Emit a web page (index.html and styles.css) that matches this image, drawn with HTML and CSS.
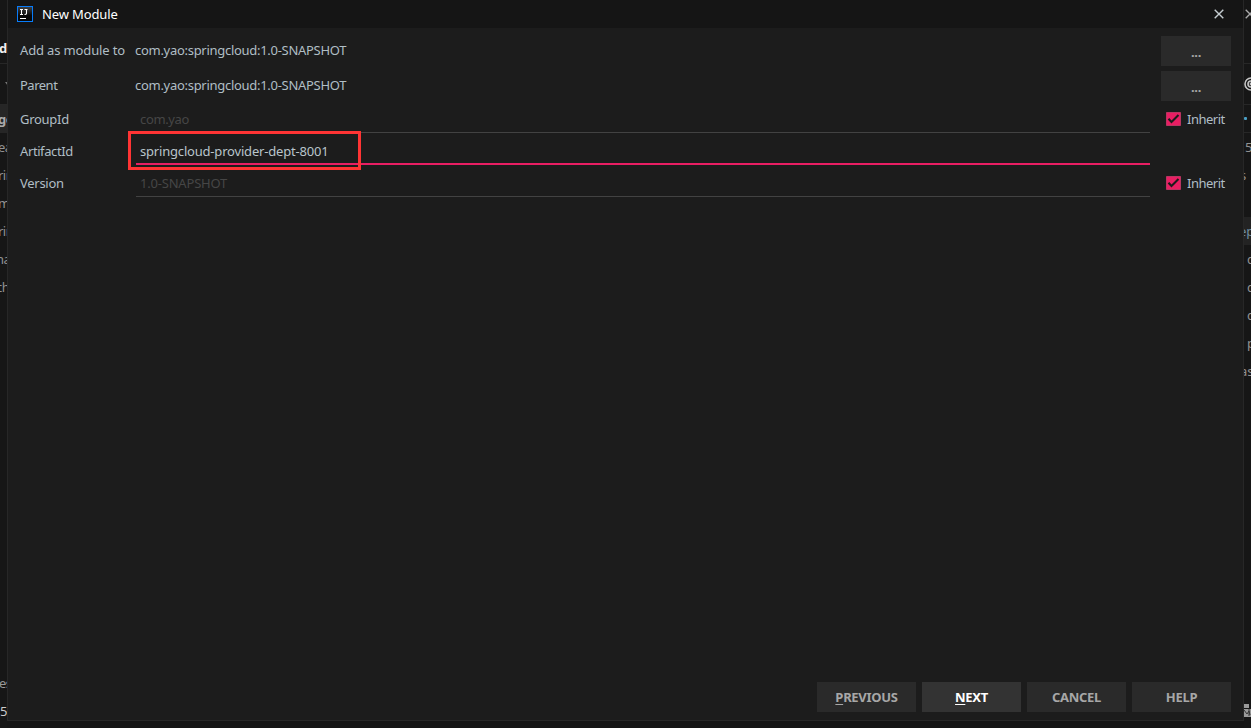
FILE: index.html
```html
<!DOCTYPE html>
<html lang="en">
<head>
<meta charset="utf-8">
<title>New Module</title>
<link rel="stylesheet" href="styles.css">
</head>
<body>
<div class="screen">
  <aside class="strip left">
    <div class="line tabs"><b>d</b></div>
    <div class="line tool"><svg width="3" height="4" viewBox="0 0 3 4"><path d="M0 0H3V4Z" fill="#777"/></svg></div>
    <div class="line selected"><b>ge</b></div>
    <div class="line">ea</div>
    <div class="line">rin</div>
    <div class="line">m</div>
    <div class="line">rin</div>
    <div class="line shifted">na</div>
    <div class="line shifted">ch</div>
    <div class="line low">es</div>
    <div class="line bright">5</div>
  </aside>
  <main class="dialog">
    <header class="titlebar">
      <svg class="logo" width="16" height="16" viewBox="0 0 16 16">
        <defs><linearGradient id="g" x2="0" y2="1"><stop stop-color="#444"/><stop offset=".6" stop-color="#080808"/></linearGradient></defs>
        <rect x=".5" y=".5" width="15" height="15" fill="url(#g)" stroke="#087cfa"/>
        <path d="M3 3.5H6M4.5 3.5V8.5M3 8.5H6M7.5 3.5H10.5M9.5 3.5V7.5Q9.5 8.5 7.5 8.5M3 12.5H9" fill="none" stroke="#fff" stroke-width="1.1"/>
      </svg>
      <span class="title">New Module</span>
      <svg class="close" width="10" height="10" viewBox="0 0 10 10"><path d="M.7.7 9.3 9.3M9.3.7.7 9.3" stroke="#c5cdd1" stroke-width="1.4"/></svg>
    </header>
    <section class="form">
      <div class="row tall"><label class="l1">Add as module to</label><span class="value">com.yao:springcloud:1.0-SNAPSHOT</span><button class="more">...</button></div>
      <div class="row tall"><label class="l2">Parent</label><span class="value">com.yao:springcloud:1.0-SNAPSHOT</span><button class="more">...</button></div>
      <div class="row"><label class="l3">GroupId</label><div class="field disabled"><span class="f1">com.yao</span></div>
        <div class="check"><svg width="15" height="14" viewBox="0 0 15 14"><path d="M.5.5H14.5V13.5H.5Z" fill="#e91e63" stroke="#b93461"/><path d="M2.5 6.8 5.5 10 12.5 3" fill="none" stroke="#1b1b1b" stroke-width="2.1"/></svg><span>Inherit</span></div></div>
      <div class="row"><label class="l4">ArtifactId</label><div class="field active"><span class="f2">springcloud-provider-dept-8001</span><i class="highlight"></i></div></div>
      <div class="row"><label class="l5">Version</label><div class="field disabled"><span class="f3">1.0-SNAPSHOT</span></div>
        <div class="check"><svg width="15" height="14" viewBox="0 0 15 14"><path d="M.5.5H14.5V13.5H.5Z" fill="#e91e63" stroke="#b93461"/><path d="M2.5 6.8 5.5 10 12.5 3" fill="none" stroke="#1b1b1b" stroke-width="2.1"/></svg><span>Inherit</span></div></div>
    </section>
    <footer class="actions">
      <button><span class="b1"><u>P</u>REVIOUS</span></button>
      <button class="primary"><span class="b2"><u>N</u>EXT</span></button>
      <button><span class="b3">CANCEL</span></button>
      <button><span class="b4">HELP</span></button>
    </footer>
  </main>
  <aside class="strip right">
    <div class="line top"><svg width="10" height="10" viewBox="0 0 10 10"><path d="M.7.7 9.3 9.3M9.3.7.7 9.3" stroke="#aaa" stroke-width="1.3"/></svg></div>
    <div class="line rule"></div>
    <div class="line target"><svg width="14" height="14" viewBox="0 0 14 14" fill="none" stroke="#c4c4c4" stroke-width="1.6"><circle cx="7" cy="7" r="6"/><circle cx="7" cy="7" r="3"/><circle cx="7" cy="7" r=".6"/></svg></div>
    <div class="line dot"><i></i></div>
    <div class="line five">5</div>
    <div class="line back">s</div>
    <div class="line picked">ep</div>
    <div class="line in">c</div>
    <div class="line in">c</div>
    <div class="line in">c</div>
    <div class="line in">p</div>
    <div class="line back2">as</div>
    <div class="line corner"><svg width="10" height="13" viewBox="0 0 10 13"><path d="M0 0H5V4H0ZM0 5H10V13H0Z" fill="#999"/><path d="M0 6 3 10 5 7 6 11M5 5V12" fill="none" stroke="#333"/></svg></div>
  </aside>
</div>
</body>
</html>
```
FILE: styles.css
```css
* { box-sizing: border-box; }
body {
  margin: 0;
  background: #151515;
  color: #b0bec5;
  font: 13px/20px "Noto Sans", sans-serif;
}
.screen { width: 1251px; height: 728px; display: flex; align-items: flex-start; overflow: hidden; }
svg { display: block; flex: none; }

.strip { height: 728px; overflow: hidden; background: #161616; color: #929292; }
.line { display: flex; align-items: center; height: 28px; white-space: nowrap; }
.left { width: 7px; }
.left .line { padding-bottom: 1px; text-indent: -2px; letter-spacing: -.5px; }
.left .tabs { height: 64px; padding-top: 33px; border-bottom: 1px solid #272727; color: #eee; text-indent: -1px; }
.left .tool { height: 41px; border-bottom: 1px solid #272727; padding-left: 5px; }
.left .selected { background: #262626; color: #aaa; }
.left .shifted { text-indent: -4px; }
.left .low { margin-top: 368px; color: #999; text-indent: -1px; }
.left .bright { color: #ccc; text-indent: 0; }

.right { width: 7px; }
.right .line { padding-left: 1px; }
.right .rule { height: 36px; border-bottom: 1px solid #272727; }
.right .target { height: 41px; padding-left: 0; border-bottom: 1px solid #272727; }
.right .dot { padding-left: 0; border-bottom: 1px solid #272727; }
.dot i { width: 3px; height: 3px; background: #4a9fc5; border-radius: 1px; }
.right .five { padding-left: 1px; }
.right .back { text-indent: -5px; }
.right .picked { margin-top: 28px; background: #232323; color: #6f8ea0; text-indent: -6px; }
.right .in { padding-left: 3px; }
.right .back2 { text-indent: -5px; }
.right .corner { margin-top: 311px; padding-left: 0; }

.dialog {
  width: 1237px; height: 721px;
  display: flex; flex-direction: column;
  background: #1c1c1c;
  border: 1px solid #272727; border-top: 0;
}
.titlebar { display: flex; align-items: center; height: 28px; padding: 0 19px 0 9px; background: #151515; }
.title { margin-left: 9px; color: #fff; letter-spacing: -.12px; }
.close { margin-left: auto; }
.form { padding: 5px 12px 0 12px; }
.row { display: flex; align-items: center; height: 32px; }
.tall { height: 35px; }
.form label { width: 115px; flex: none; white-space: nowrap; }
.tall label, .value { padding-bottom: 2px; }
.l1 { letter-spacing: -.14px; }
.l2 { letter-spacing: -.5px; }
.l3 { letter-spacing: -.28px; }
.l4 { letter-spacing: -.4px; }
.l5 { letter-spacing: -.28px; }
.value { margin-right: auto; letter-spacing: -.29px; }
button { font: inherit; border: 0; padding: 0; background: #2a2a2a; color: #a7a7a7; }
.more { width: 70px; height: 30px; padding-top: 3px; font-weight: bold; line-height: 27px; letter-spacing: -.3px; }
.field {
  position: relative; width: 1014px; height: 28px; margin-left: 1px;
  padding: 4px 0 0 4px; border-bottom: 1px solid #424242;
}
.f1 { letter-spacing: -.35px; }
.f2 { letter-spacing: -.19px; }
.f3 { letter-spacing: -.2px; }
.disabled { color: #464646; }
.active { border-bottom: 2px solid #e91e63; color: #b9c5cb; }
.highlight {
  position: absolute; left: -8px; top: -6px;
  width: 233px; height: 39px; border: 3px solid #ff3434;
}
.check { display: flex; align-items: center; gap: 6px; margin-left: 16px; letter-spacing: -.5px; }
.actions { display: flex; justify-content: flex-end; gap: 6px; margin-top: auto; padding: 0 12px 8px 0; }
.actions button { width: 99px; height: 30px; font-weight: bold; letter-spacing: -.3px; }
.actions .primary { background: #333; color: #fff; }
u { text-underline-offset: 2px; text-decoration-thickness: 1px; }
```
